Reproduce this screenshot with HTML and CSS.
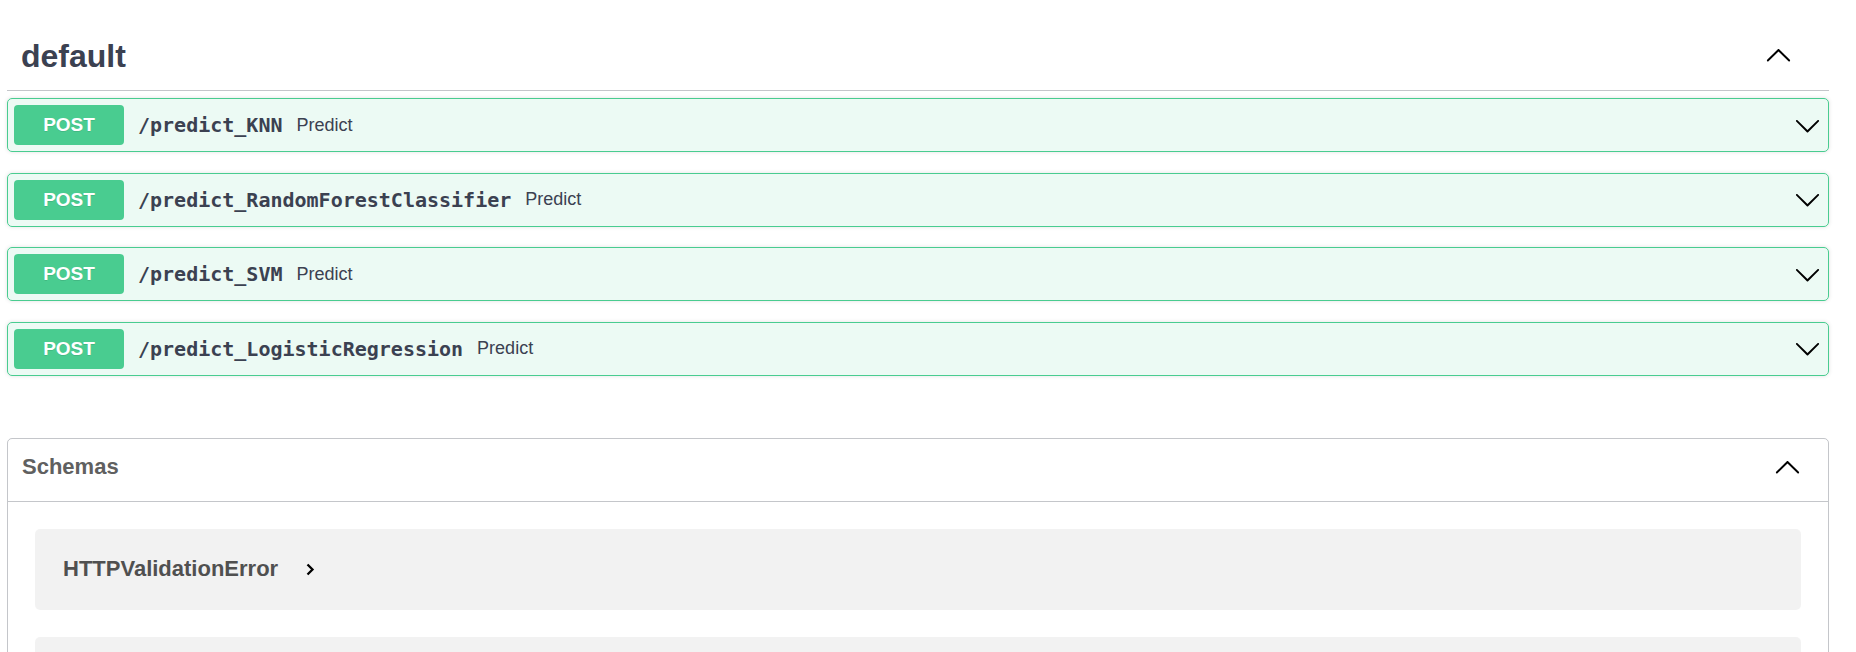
FILE: index.html
```html
<!DOCTYPE html>
<html lang="en">
<head>
    <meta charset="UTF-8">
    <meta name="viewport" content="width=device-width, initial-scale=1.0">
    <title>API Docs</title>
    <link rel="stylesheet" href="styles.css">
</head>
<body>
    <div class="wrapper">
        <section class="tag-section">
            <h3 class="opblock-tag">
                <span>default</span>
                <svg class="arrow tag-arrow" viewBox="0 0 20 20" width="27" height="27">
                    <path d="M17.418 14.908c.272.268.709.268.979 0s.271-.701 0-.969l-7.908-7.83c-.27-.268-.707-.268-.979 0l-7.908 7.83c-.27.268-.27.701 0 .969.271.268.709.268.979 0L10 7.767l7.418 7.141z"/>
                </svg>
            </h3>

            <div class="opblock">
                <span class="method">POST</span>
                <span class="path">/predict_KNN</span>
                <span class="summary">Predict</span>
                <svg class="arrow op-arrow" viewBox="0 0 20 20" width="27" height="27">
                    <path d="M17.418 6.109c.272-.268.709-.268.979 0s.271.701 0 .969l-7.908 7.83c-.27.268-.707.268-.979 0l-7.908-7.83c-.27-.268-.27-.701 0-.969.271-.268.709-.268.979 0L10 13.25l7.418-7.141z"/>
                </svg>
            </div>

            <div class="opblock">
                <span class="method">POST</span>
                <span class="path">/predict_RandomForestClassifier</span>
                <span class="summary">Predict</span>
                <svg class="arrow op-arrow" viewBox="0 0 20 20" width="27" height="27">
                    <path d="M17.418 6.109c.272-.268.709-.268.979 0s.271.701 0 .969l-7.908 7.83c-.27.268-.707.268-.979 0l-7.908-7.83c-.27-.268-.27-.701 0-.969.271-.268.709-.268.979 0L10 13.25l7.418-7.141z"/>
                </svg>
            </div>

            <div class="opblock">
                <span class="method">POST</span>
                <span class="path">/predict_SVM</span>
                <span class="summary">Predict</span>
                <svg class="arrow op-arrow" viewBox="0 0 20 20" width="27" height="27">
                    <path d="M17.418 6.109c.272-.268.709-.268.979 0s.271.701 0 .969l-7.908 7.83c-.27.268-.707.268-.979 0l-7.908-7.83c-.27-.268-.27-.701 0-.969.271-.268.709-.268.979 0L10 13.25l7.418-7.141z"/>
                </svg>
            </div>

            <div class="opblock">
                <span class="method">POST</span>
                <span class="path">/predict_LogisticRegression</span>
                <span class="summary">Predict</span>
                <svg class="arrow op-arrow" viewBox="0 0 20 20" width="27" height="27">
                    <path d="M17.418 6.109c.272-.268.709-.268.979 0s.271.701 0 .969l-7.908 7.83c-.27.268-.707.268-.979 0l-7.908-7.83c-.27-.268-.27-.701 0-.969.271-.268.709-.268.979 0L10 13.25l7.418-7.141z"/>
                </svg>
            </div>
        </section>

        <section class="models">
            <h4 class="models-title">
                <span>Schemas</span>
                <svg class="arrow models-arrow" viewBox="0 0 20 20" width="27" height="27">
                    <path d="M17.418 14.908c.272.268.709.268.979 0s.271-.701 0-.969l-7.908-7.83c-.27-.268-.707-.268-.979 0l-7.908 7.83c-.27.268-.27.701 0 .969.271.268.709.268.979 0L10 7.767l7.418 7.141z"/>
                </svg>
            </h4>
            <div class="models-body">
                <div class="model-container">
                    <span class="model-title">HTTPValidationError</span>
                    <svg class="model-toggle" viewBox="0 0 9 13" width="9" height="13">
                        <polyline points="1.5,1.5 6.5,6.5 1.5,11.5"/>
                    </svg>
                </div>
                <div class="model-container">
                    <span class="model-title">ValidationError</span>
                    <svg class="model-toggle" viewBox="0 0 9 13" width="9" height="13">
                        <polyline points="1.5,1.5 6.5,6.5 1.5,11.5"/>
                    </svg>
                </div>
            </div>
        </section>
    </div>
</body>
</html>
```

FILE: styles.css
```css
body {
    margin: 0;
    padding: 0;
    background: #fff;
    font-family: 'Liberation Sans', Arial, sans-serif;
    color: #3b4151;
    overflow: hidden;
}

.wrapper {
    padding: 24px 27px 0 7px;
}

.tag-section {
    display: flex;
    flex-direction: column;
}

.opblock-tag {
    display: flex;
    align-items: center;
    margin: 0 0 7px;
    padding: 14px 37px 15px 14px;
    font-size: 32px;
    line-height: 37px;
    font-weight: bold;
    color: #3b4151;
    border-bottom: 1px solid rgba(59, 65, 81, 0.3);
}

.arrow {
    flex: none;
    margin-left: auto;
    fill: #000;
}

.tag-arrow {
    margin-bottom: 5px;
}

.opblock {
    display: flex;
    align-items: center;
    height: 40px;
    margin-bottom: 20.5px;
    padding: 6px 7px 6px 6px;
    background-color: rgba(73, 204, 144, 0.1);
    border: 1px solid #49cc90;
    border-radius: 5px;
    box-shadow: 0 0 4px rgba(0, 0, 0, 0.12);
}

.method {
    min-width: 110px;
    height: 40px;
    line-height: 40px;
    text-align: center;
    font-size: 19px;
    font-weight: bold;
    color: #fff;
    background-color: #49cc90;
    border-radius: 4px;
    text-shadow: 0 1px 0 rgba(0, 0, 0, 0.1);
}

.path {
    padding: 0 14px;
    font-family: 'DejaVu Sans Mono', 'Liberation Mono', monospace;
    font-size: 20px;
    font-weight: bold;
    color: #3b4151;
}

.summary {
    font-size: 18px;
    color: #3b4151;
}

.models {
    margin-top: 41.5px;
    border: 1px solid rgba(59, 65, 81, 0.3);
    border-radius: 5px;
}

.models-title {
    display: flex;
    align-items: center;
    margin: 0;
    padding: 14px 27px 21px 14px;
    font-size: 22px;
    line-height: 27px;
    font-weight: bold;
    color: #606060;
    border-bottom: 1px solid rgba(59, 65, 81, 0.3);
}

.models-body {
    padding-bottom: 27px;
}

.model-container {
    display: flex;
    align-items: center;
    height: 81px;
    margin: 0 27px 27px;
    padding: 0 28px;
    background-color: rgba(0, 0, 0, 0.05);
    border-radius: 5px;
}

.model-container:first-child {
    margin-top: 27px;
}

.model-title {
    font-size: 22px;
    font-weight: bold;
    color: #505050;
}

.model-toggle {
    margin-left: 28px;
    fill: none;
    stroke: #000;
    stroke-width: 2.3;
}
```
